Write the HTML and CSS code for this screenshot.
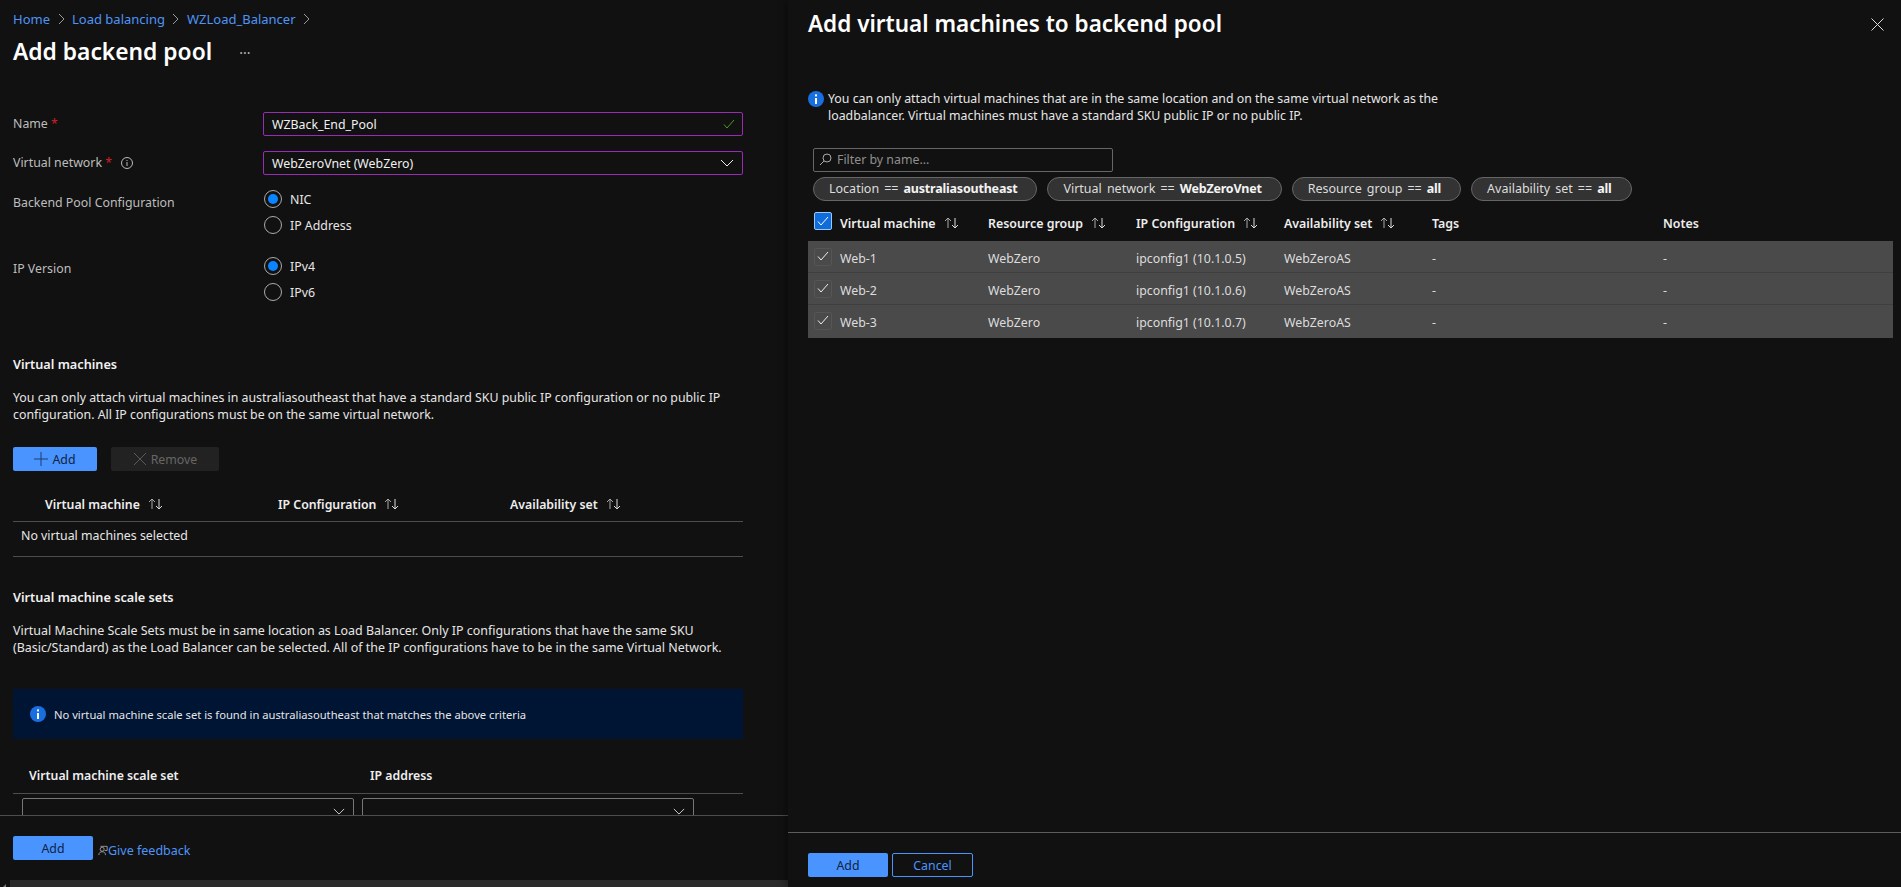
FILE: index.html
```html
<!DOCTYPE html>
<html lang="en">
<head>
  <meta charset="UTF-8" />
  <title>Add backend pool</title>
  <link rel="stylesheet" href="styles.css">
</head>
<body>
  <svg class="defs" width="0" height="0">
    <symbol id="sort" viewBox="0 0 18 14"><path d="M5 12V2M2 5l3-3 3 3" fill="none" stroke="#aaa"/><path d="M12 2v10M9 9l3 3 3-3" fill="none" stroke="#ddd"/></symbol>
    <symbol id="chev" viewBox="0 0 14 8"><path d="M1 1l6 6 6-6" fill="none" stroke="#eee"/></symbol>
    <symbol id="crumb" viewBox="0 0 7 12"><path d="M1 1l5 5-5 5" fill="none" stroke="#9a9a9a"/></symbol>
    <symbol id="tick" viewBox="0 0 12 10"><path d="M1 5.5L4 9l7-8" fill="none" stroke="currentColor"/></symbol>
    <symbol id="info" viewBox="0 0 16 16"><circle cx="8" cy="8" r="8" fill="#1a6fe0"/><rect x="7" y="7" width="2" height="6" fill="#fff"/><rect x="7" y="3.4" width="2" height="2" fill="#fff"/></symbol>
  </svg>

  <div class="page">
    <div class="pane-left">
      <div class="scroll-area">
        <nav class="breadcrumb">
          <a>Home</a><svg class="crumb-icon"><use href="#crumb"/></svg>
          <a>Load balancing</a><svg class="crumb-icon"><use href="#crumb"/></svg>
          <a>WZLoad_Balancer</a><svg class="crumb-icon"><use href="#crumb"/></svg>
        </nav>
        <div class="title-row">
          <h1 class="title">Add backend pool</h1>
          <span class="more">···</span>
        </div>

        <div class="form-row row-name">
          <label class="form-label">Name <span class="req">*</span></label>
          <div class="field">
            <span>WZBack_End_Pool</span>
            <svg class="field-tick"><use href="#tick"/></svg>
          </div>
        </div>
        <div class="form-row row-vnet">
          <label class="form-label">Virtual network <span class="req">*</span>
            <svg class="hint" viewBox="0 0 12 12"><circle cx="6" cy="6" r="5.5" fill="none" stroke="#bbb"/><path d="M6 5v4M6 3v1" stroke="#bbb" fill="none"/></svg>
          </label>
          <div class="field">
            <span>WebZeroVnet (WebZero)</span>
            <svg class="field-chev"><use href="#chev"/></svg>
          </div>
        </div>
        <div class="form-row row-radio row-config">
          <label class="form-label">Backend Pool Configuration</label>
          <div class="radio-list">
            <div class="radio-item"><span class="radio checked"></span>NIC</div>
            <div class="radio-item"><span class="radio"></span>IP Address</div>
          </div>
        </div>
        <div class="form-row row-radio row-version">
          <label class="form-label">IP Version</label>
          <div class="radio-list">
            <div class="radio-item"><span class="radio checked"></span>IPv4</div>
            <div class="radio-item"><span class="radio"></span>IPv6</div>
          </div>
        </div>

        <h2 class="section-title vm-title">Virtual machines</h2>
        <p class="section-text vm-text">You can only attach virtual machines in australiasoutheast that have a standard SKU public IP configuration or no public IP configuration. All IP configurations must be on the same virtual network.</p>
        <div class="toolbar">
          <button class="btn-primary btn-add"><svg class="btn-icon" viewBox="0 0 14 14"><path d="M7 0v14M0 7h14" stroke="#1c3d6e" fill="none"/></svg>Add</button>
          <button class="btn-disabled"><svg class="btn-icon" viewBox="0 0 14 14"><path d="M1 1l12 12M13 1L1 13" stroke="#5a5a5a" fill="none"/></svg>Remove</button>
        </div>
        <div class="mini-head">
          <span class="mh-vm">Virtual machine<svg class="sort"><use href="#sort"/></svg></span>
          <span class="mh-ip">IP Configuration<svg class="sort"><use href="#sort"/></svg></span>
          <span class="mh-as">Availability set<svg class="sort"><use href="#sort"/></svg></span>
        </div>
        <div class="mini-empty">No virtual machines selected</div>

        <h2 class="section-title vmss-title">Virtual machine scale sets</h2>
        <p class="section-text vmss-text">Virtual Machine Scale Sets must be in same location as Load Balancer. Only IP configurations that have the same SKU (Basic/Standard) as the Load Balancer can be selected. All of the IP configurations have to be in the same Virtual Network.</p>
        <div class="info-bar"><svg class="info-icon"><use href="#info"/></svg>No virtual machine scale set is found in australiasoutheast that matches the above criteria</div>
        <div class="mini-head vmss-head">
          <span class="mh-ss">Virtual machine scale set</span>
          <span>IP address</span>
        </div>
        <div class="vmss-row">
          <div class="select-box"><svg class="select-chev"><use href="#chev"/></svg></div>
          <div class="select-box"><svg class="select-chev"><use href="#chev"/></svg></div>
        </div>
      </div>
      <div class="left-footer">
        <button class="btn-primary btn-wide">Add</button>
        <a class="feedback"><svg class="feedback-icon" viewBox="0 0 12 12"><circle cx="5" cy="4.5" r="2.4" fill="none" stroke="#aaa"/><path d="M1 11.5c0-3 2-4 4-4s4 1 4 4M3 1h8v5H8" fill="none" stroke="#aaa"/></svg>Give feedback</a>
      </div>
      <div class="h-scroll">
        <svg class="scroll-arrow" viewBox="0 0 10 7"><path d="M3 7l3-3v3z" fill="#777"/></svg>
        <div class="scroll-thumb"></div>
      </div>
    </div>

    <div class="pane-right">
      <div class="panel-head">
        <h1 class="title">Add virtual machines to backend pool</h1>
        <svg class="close" viewBox="0 0 13 13"><path d="M.5.5l12 12M12.5.5l-12 12" stroke="#ddd" fill="none"/></svg>
      </div>
      <div class="panel-note">
        <svg class="note-icon"><use href="#info"/></svg>
        <p>You can only attach virtual machines that are in the same location and on the same virtual network as the loadbalancer. Virtual machines must have a standard SKU public IP or no public IP.</p>
      </div>
      <div class="filter-box">
        <svg class="filter-icon" viewBox="0 0 13 13"><circle cx="8" cy="5" r="4" fill="none" stroke="#aaa"/><path d="M5 8l-4 4" stroke="#aaa" fill="none"/></svg>
        Filter by name...
      </div>
      <div class="pills">
        <span class="pill">Location == <b>australiasoutheast</b></span>
        <span class="pill">Virtual network == <b>WebZeroVnet</b></span>
        <span class="pill">Resource group == <b>all</b></span>
        <span class="pill">Availability set == <b>all</b></span>
      </div>
      <div class="grid-row grid-head">
        <span class="check check-on"><svg class="check-tick"><use href="#tick"/></svg></span>
        <span class="cell">Virtual machine<svg class="sort"><use href="#sort"/></svg></span>
        <span class="cell">Resource group<svg class="sort"><use href="#sort"/></svg></span>
        <span class="cell">IP Configuration<svg class="sort"><use href="#sort"/></svg></span>
        <span class="cell">Availability set<svg class="sort"><use href="#sort"/></svg></span>
        <span class="cell">Tags</span>
        <span class="cell">Notes</span>
      </div>
      <div class="grid-body">
        <div class="grid-row grid-item">
          <span class="check"><svg class="check-tick"><use href="#tick"/></svg></span>
          <span class="cell">Web-1</span><span class="cell">WebZero</span><span class="cell">ipconfig1 (10.1.0.5)</span><span class="cell">WebZeroAS</span><span class="cell">-</span><span class="cell">-</span>
        </div>
        <div class="grid-row grid-item">
          <span class="check"><svg class="check-tick"><use href="#tick"/></svg></span>
          <span class="cell">Web-2</span><span class="cell">WebZero</span><span class="cell">ipconfig1 (10.1.0.6)</span><span class="cell">WebZeroAS</span><span class="cell">-</span><span class="cell">-</span>
        </div>
        <div class="grid-row grid-item">
          <span class="check"><svg class="check-tick"><use href="#tick"/></svg></span>
          <span class="cell">Web-3</span><span class="cell">WebZero</span><span class="cell">ipconfig1 (10.1.0.7)</span><span class="cell">WebZeroAS</span><span class="cell">-</span><span class="cell">-</span>
        </div>
      </div>
      <div class="right-footer">
        <button class="btn-primary btn-wide">Add</button>
        <button class="btn-outline">Cancel</button>
      </div>
    </div>
  </div>
</body>
</html>
```

FILE: styles.css
```css
* {
  box-sizing: border-box;
}

html, body {
  height: 100%;
}

body {
  margin: 0;
  background: #111;
  color: #e6e6e6;
  font-family: "Noto Sans", "Open Sans", sans-serif;
  font-size: 12.35px;
  line-height: 17px;
  overflow: hidden;
}

.defs {
  position: absolute;
}

.page {
  display: flex;
  height: 887px;
}

/* left blade */
.pane-left {
  width: 788px;
  display: flex;
  flex-direction: column;
}

.scroll-area {
  height: 815px;
  overflow: hidden;
  padding: 10px 45px 0 13px;
}

.breadcrumb {
  display: flex;
  align-items: center;
  height: 18px;
  font-size: 13px;
  color: #4f94f7;
}

.crumb-icon {
  width: 7px;
  height: 12px;
  margin: 0 7.5px;
}

.title-row {
  display: flex;
  align-items: center;
  height: 30px;
  margin-top: 9px;
}

.title {
  margin: 0;
  font-size: 22.5px;
  line-height: 28px;
  font-weight: 600;
  color: #fff;
}

.title-row .title {
  font-size: 22.8px;
}

.more {
  margin-left: 27px;
  color: #bbb;
  font-size: 14px;
}

.form-row {
  display: flex;
}

.row-name {
  margin-top: 45px;
}

.row-vnet {
  margin-top: 15px;
}

.row-config {
  margin-top: 15px;
}

.row-config .form-label {
  padding-top: 1px;
}

.row-version {
  margin-top: 23px;
}

.form-label {
  width: 250px;
  line-height: 24px;
  color: #bdbdbd;
}

.req {
  color: #d0202a;
}

.hint {
  width: 12px;
  height: 12px;
  margin-left: 6px;
  vertical-align: -2px;
}

.field {
  width: 480px;
  height: 24px;
  border: 1px solid #9a2bb5;
  border-radius: 2px;
  padding: 0 8px;
  display: flex;
  align-items: center;
  justify-content: space-between;
  color: #f0f0f0;
}

.field-tick {
  width: 12px;
  height: 10px;
  color: #4f9a1f;
  margin-right: -1px;
}

.field-chev {
  width: 14px;
  height: 8px;
}

.radio-list {
  display: flex;
  flex-direction: column;
  gap: 8px;
}

.radio-item {
  display: flex;
  align-items: center;
  gap: 8px;
  height: 18px;
}

.radio {
  width: 18px;
  height: 18px;
  border: 1px solid #aaa;
  border-radius: 50%;
  margin-left: 1px;
  display: flex;
  align-items: center;
  justify-content: center;
}

.radio.checked::after {
  content: "";
  width: 10px;
  height: 10px;
  border-radius: 50%;
  background: #0a84ff;
}

.section-title {
  margin: 0;
  font-size: 12.7px;
  line-height: 18px;
  font-weight: 600;
  color: #f2f2f2;
}

.vm-title {
  margin-top: 54px;
}

.vmss-title {
  margin-top: 31px;
}

.section-text {
  margin: 16px 0 0;
  color: #e6e6e6;
}

.vm-text {
  margin-top: 16px;
}

.vmss-text {
  font-size: 12.45px;
}

.toolbar {
  display: flex;
  gap: 14px;
  margin-top: 24px;
}

button {
  font: inherit;
  border: none;
  border-radius: 2px;
  height: 24px;
  padding: 0;
}

.btn-primary {
  background: #4a94ff;
  color: #10233f;
}

.btn-add {
  width: 84px;
}

.btn-disabled {
  width: 108px;
  background: #222;
  color: #666;
}

.btn-icon {
  width: 14px;
  height: 14px;
  margin-right: 4px;
  vertical-align: -2px;
}

.mini-head {
  display: flex;
  align-items: center;
  height: 51px;
  border-bottom: 1px solid #4d4d4d;
  font-size: 12.3px;
  font-weight: 600;
  color: #eee;
  padding-top: 16px;
}

.mini-head span {
  display: flex;
  align-items: center;
}

.mh-vm {
  width: 233px;
  margin-left: 32px;
}

.mh-ip {
  width: 232px;
}

.sort {
  width: 18px;
  height: 14px;
  margin-left: 7px;
}

.mini-empty {
  height: 35px;
  padding: 5px 8px 0;
  border-bottom: 1px solid #4d4d4d;
}

.info-bar {
  display: flex;
  align-items: center;
  height: 50px;
  margin-top: 33px;
  padding-left: 17px;
  background: #001433;
  font-size: 11.2px;
}

.info-icon {
  width: 16px;
  height: 16px;
  margin-right: 8px;
}

.vmss-head {
  height: 55px;
  padding-top: 19px;
}

.mh-ss {
  width: 341px;
  margin-left: 16px;
}

.vmss-row {
  display: flex;
  gap: 8px;
  margin: 4px 0 0 9px;
}

.select-box {
  width: 332px;
  height: 24px;
  border: 1px solid #777;
  border-radius: 2px;
  display: flex;
  justify-content: flex-end;
  padding: 9px 8px 0 0;
}

.select-chev {
  width: 12px;
  height: 7px;
}

.left-footer {
  height: 65px;
  border-top: 1px solid #4d4d4d;
  padding: 20px 0 0 13px;
  display: flex;
}

.btn-wide {
  width: 80px;
}

.feedback {
  display: flex;
  align-items: center;
  height: 24px;
  margin: 2px 0 0 5px;
  font-size: 12.5px;
  color: #4f94f7;
}

.feedback-icon {
  width: 10px;
  height: 11px;
}

.h-scroll {
  display: flex;
  height: 7px;
}

.scroll-arrow {
  width: 10px;
  height: 7px;
}

.scroll-thumb {
  flex: 1;
  background: #2b2b2b;
}

/* right blade */
.pane-right {
  flex: 1;
  position: relative;
  display: flex;
  flex-direction: column;
  padding: 10px 8px 0 20px;
  box-shadow: -4px 0 6px rgba(0, 0, 0, 0.25);
}

.panel-head {
  display: flex;
  align-items: center;
  justify-content: space-between;
  height: 28px;
  padding-right: 9px;
}

.close {
  width: 13px;
  height: 13px;
}

.panel-note {
  display: flex;
  align-items: flex-start;
  gap: 4px;
  width: 660px;
  margin-top: 52px;
}

.note-icon {
  width: 16px;
  height: 16px;
  margin-top: 1px;
  flex: none;
}

.panel-note p {
  margin: 0;
}

.filter-box {
  display: flex;
  align-items: center;
  gap: 5px;
  width: 300px;
  height: 24px;
  margin: 24px 0 0 5px;
  padding: 0 0 1px 5px;
  border: 1px solid #666;
  border-radius: 2px;
  color: #8f8f8f;
}

.filter-icon {
  width: 13px;
  height: 13px;
}

.pills {
  display: flex;
  gap: 10px;
  margin: 5px 0 0 5px;
}

.pill {
  height: 24px;
  line-height: 22px;
  padding: 0 19px 0 15px;
  border: 1px solid #666;
  border-radius: 12px;
  background: #333;
  color: #ddd;
  font-size: 12.5px;
  word-spacing: 1.8px;
  white-space: nowrap;
}

.pill b {
  color: #f4f4f4;
  letter-spacing: -0.2px;
}

.grid-row {
  display: grid;
  grid-template-columns: 32px 148px 148px 148px 148px 231px 1fr;
  align-items: center;
}

.grid-head {
  height: 40px;
  font-size: 12.4px;
  font-weight: 600;
  color: #eee;
}

.cell {
  display: flex;
  align-items: center;
}

.grid-head .cell {
  padding-top: 4px;
}

.grid-item {
  height: 32px;
  background: #4a4a4a;
  border-bottom: 1px solid #3f3f3f;
  color: #ddd;
}

.grid-item .cell {
  padding-top: 3px;
}

.grid-item:last-child {
  height: 33px;
  padding-bottom: 1px;
  border-bottom: none;
}

.check {
  width: 18px;
  height: 18px;
  margin-left: 6px;
  display: flex;
  align-items: center;
  justify-content: center;
  color: #eee;
}

.grid-item .check {
  border: 1px solid #555;
  border-radius: 2px;
}

.grid-item .check-tick {
  margin-top: -2px;
}

.grid-head .check-on {
  background: #0f6cdb;
  border: 1px solid #9cc6f5;
  border-radius: 2px;
  color: #fff;
}

.check-tick {
  width: 12px;
  height: 10px;
}

.right-footer {
  position: absolute;
  left: 0;
  right: 0;
  bottom: 0;
  height: 55px;
  border-top: 1px solid #5c5c5c;
  padding: 20px 0 0 20px;
  display: flex;
  gap: 4px;
}

.btn-outline {
  width: 81px;
  background: none;
  border: 1px solid #4a94ff;
  color: #4a94ff;
}
```
